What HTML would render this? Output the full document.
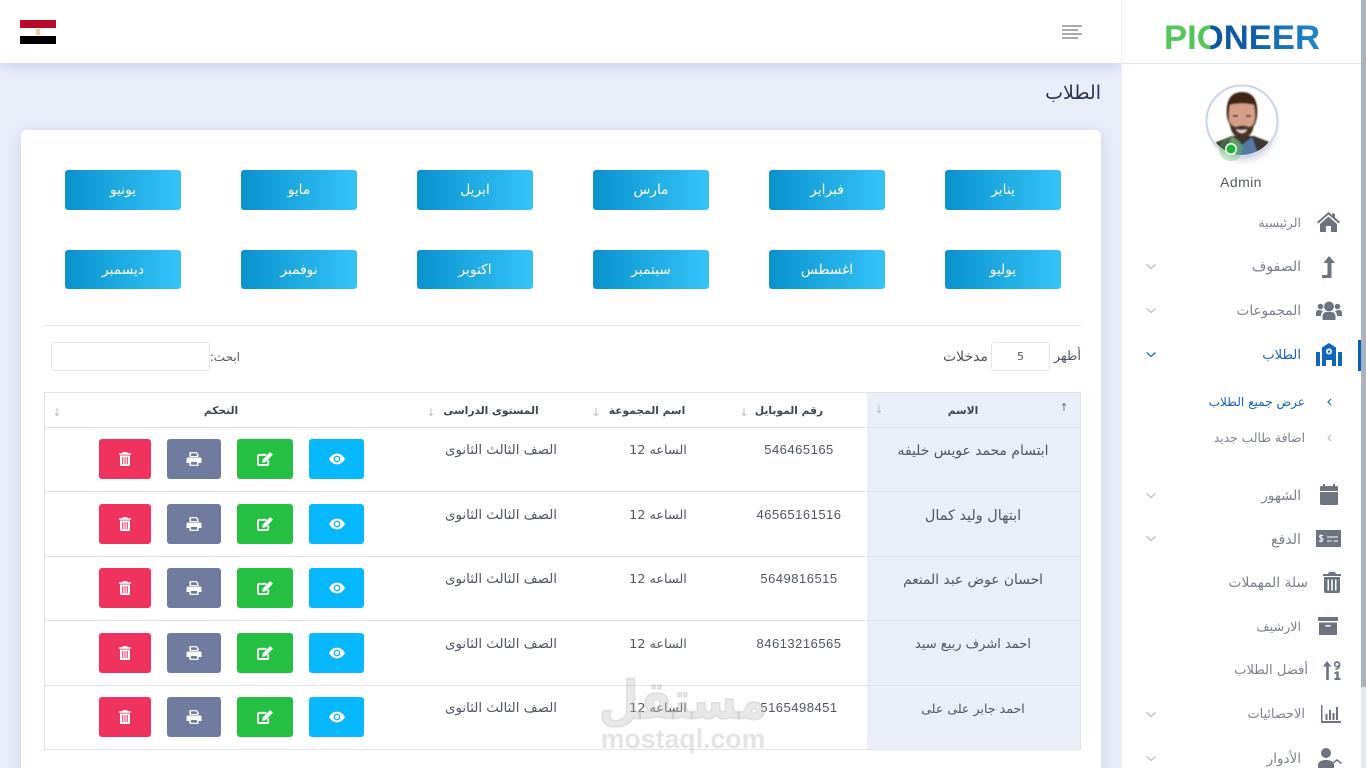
<!DOCTYPE html>
<html lang="ar">
<head>
<meta charset="utf-8">
<title>الطلاب</title>
<style>
*{box-sizing:border-box}
html,body{margin:0;padding:0;width:1366px;height:768px;overflow:hidden;background:#e9eef9;font-family:"Liberation Sans","DejaVu Sans",sans-serif}
#w{position:relative;width:1366px;height:768px;overflow:hidden}
.a{position:absolute}
.t{position:absolute;white-space:nowrap;line-height:20px;height:20px;font-family:"DejaVu Sans",sans-serif}
.c{transform:translateX(-50%);text-align:center}
.r{direction:rtl;text-align:right}
.m{position:absolute;width:116px;height:40px;border-radius:3px;background:linear-gradient(90deg,#0a92ce,#36c4f8);color:#fff;font:13.8px/41px "DejaVu Sans",sans-serif;text-align:center}
.s{font-size:13.5px;color:#7b808a;margin-top:1px}
.d{font-size:13.4px;color:#50565f;margin-top:2px}
.d.n{font-family:"Liberation Sans",sans-serif;font-size:13px;letter-spacing:.5px;margin-top:1px}
.h{font-size:10.7px;font-weight:bold;color:#3f4650;margin-top:1px}
.ar{font-size:11px;color:#b6bcc6;font-family:"DejaVu Sans",sans-serif}
.b{position:absolute;height:40px;border-radius:3px}
.b svg{position:absolute;left:50%;top:50%;transform:translate(-50%,-50%)}
.l{position:absolute;left:44px;width:1037px;height:1px;background:#dfe3ea}
.i{position:absolute;fill:#6d7480}
.ch{position:absolute;fill:none;stroke:#b7bcc5;stroke-width:1.2}
</style>
</head>
<body>
<div id="w">
<svg width="0" height="0" style="position:absolute">
<defs>
<symbol id="eye" viewBox="0 0 18 12"><path fill="#fff" d="M9 0C5 0 2 2.500 0 6c2 3.500 5 6 9 6s7-2.500 9-6c-2-3.500-5-6-9-6z"/><circle cx="9" cy="6" r="3.800" fill="#08b8fd"/><circle cx="9" cy="6" r="2.300" fill="#fff"/></symbol>
<symbol id="edit" viewBox="0 0 17 15"><path fill="none" stroke="#fff" stroke-width="2" d="M10 3H2.500A1.500 1.500 0 0 0 1 4.500v8.500A1 1 0 0 0 2 14h9a1 1 0 0 0 1-1V9"/><path fill="#fff" d="M14 0l3 3-8 8-3.500.500L6 8z"/></symbol>
<symbol id="print" viewBox="0 0 15 14"><path fill="#fff" fill-rule="evenodd" d="M3 0h7l2 2v3H3zM4.500 1.300v2.700h6V2.500l-1-1.200zM1.500 5.500h12A1.500 1.500 0 0 1 15 7v4h-3v3H3v-3H0V7a1.500 1.500 0 0 1 1.500-1.500zM4.500 10v2.700h6V10z"/></symbol>
<symbol id="trash" viewBox="0 0 12 14"><path fill="#fff" fill-rule="evenodd" d="M4 0h4l.700 1.200H12v1.500H0V1.200h3.300zM1 3.500h10V13a1 1 0 0 1-1 1H2a1 1 0 0 1-1-1zM3.200 5v7.300h1V5zM5.500 5v7.300h1V5zM7.800 5v7.300h1V5z"/></symbol>
<linearGradient id="lg" gradientUnits="userSpaceOnUse" x1="1165" y1="0" x2="1320" y2="0">
<stop offset="0" stop-color="#55c75a"/><stop offset="0.295" stop-color="#55c75a"/><stop offset="0.295" stop-color="#0d559f"/><stop offset="0.5" stop-color="#0d5aa5"/><stop offset="1" stop-color="#2089c8"/>
</linearGradient>
</defs>
</svg>

<!-- header -->
<div class="a" style="left:0;top:0;width:1122px;height:63px;background:#fff;box-shadow:0 2px 14px rgba(130,145,185,.35)"></div>
<div class="a" style="left:20px;top:20px;width:36px;height:8px;background:#bd0a2b"></div>
<div class="a" style="left:20px;top:28px;width:36px;height:8px;background:#fff"></div>
<div class="a" style="left:20px;top:36px;width:36px;height:8px;background:#000"></div>
<div class="a" style="left:36px;top:29px;width:4px;height:6px;background:#eccf9a"></div>
<div class="a" style="left:1062px;top:25px;width:20px;height:2px;background:#a9abaf"></div>
<div class="a" style="left:1062px;top:29px;width:16px;height:2px;background:#a9abaf"></div>
<div class="a" style="left:1062px;top:33px;width:20px;height:2px;background:#a9abaf"></div>
<div class="a" style="left:1062px;top:37px;width:16px;height:2px;background:#a9abaf"></div>

<div class="t r" style="right:265px;top:83px;font-size:19px;color:#2b3352">الطلاب</div>

<!-- card -->
<div class="a" style="left:21px;top:130px;width:1080px;height:660px;background:#fff;border-radius:6px;box-shadow:0 4px 18px rgba(130,145,185,.3)"></div>

<div class="m" style="left:945px;top:170px">يناير</div>
<div class="m" style="left:769px;top:170px">فبراير</div>
<div class="m" style="left:593px;top:170px">مارس</div>
<div class="m" style="left:417px;top:170px">ابريل</div>
<div class="m" style="left:241px;top:170px">مايو</div>
<div class="m" style="left:65px;top:170px">يونيو</div>
<div class="m" style="left:945px;top:250px;height:39px">يوليو</div>
<div class="m" style="left:769px;top:250px;height:39px">اغسطس</div>
<div class="m" style="left:593px;top:250px;height:39px">سبتمبر</div>
<div class="m" style="left:417px;top:250px;height:39px">اكتوبر</div>
<div class="m" style="left:241px;top:250px;height:39px">نوفمبر</div>
<div class="m" style="left:65px;top:250px;height:39px">ديسمبر</div>

<div class="l" style="top:325px;background:#e6e8ee"></div>

<div class="t r d" style="right:285px;top:345px;font-size:13px">أظهر</div>
<div class="a" style="left:991px;top:342px;width:59px;height:29px;border:1px solid #e2e5ec;border-radius:3px;background:#fff;font:11px/27px 'DejaVu Sans',sans-serif;color:#555;text-align:center">5</div>
<div class="t r d" style="right:378px;top:345px;font-size:14px">مدخلات</div>
<div class="t r d" style="right:1126px;top:345px;font-size:12px">ابحث:</div>
<div class="a" style="left:51px;top:342px;width:159px;height:29px;border:1px solid #e2e5ec;border-radius:3px;background:#fff"></div>

<!-- table -->
<div class="a" style="left:867px;top:393px;width:214px;height:357px;background:#e9eef9"></div>
<div class="l" style="top:392px"></div>
<div class="l" style="top:427px"></div>
<div class="l" style="top:491px"></div>
<div class="l" style="top:556px"></div>
<div class="l" style="top:620px"></div>
<div class="l" style="top:685px"></div>
<div class="l" style="top:749px"></div>
<div class="a" style="left:44px;top:392px;width:1px;height:358px;background:#dfe3ea"></div>
<div class="a" style="left:1080px;top:392px;width:1px;height:358px;background:#dfe3ea"></div>

<div class="t c h" style="left:963px;top:400px">الاسم</div>
<div class="t c h" style="left:789px;top:400px">رقم الموبايل</div>
<div class="t c h" style="left:647px;top:400px">اسم المجموعة</div>
<div class="t c h" style="left:491px;top:400px">المستوى الدراسى</div>
<div class="t c h" style="left:221px;top:400px">التحكم</div>
<div class="t c ar" style="left:1064px;top:398px;color:#6f7680">↑</div>
<div class="t c ar" style="left:879px;top:400px">↓</div>
<div class="t c ar" style="left:744px;top:403px">↓</div>
<div class="t c ar" style="left:596px;top:403px">↓</div>
<div class="t c ar" style="left:431px;top:403px">↓</div>
<div class="t c ar" style="left:57px;top:403px">↓</div>

<!-- row 1 -->
<div class="t c d" style="left:973px;top:439px;font-size:13.9px">ابتسام محمد عويس خليفه</div>
<div class="t c d n" style="left:799px;top:439px">546465165</div>
<div class="t c d" style="left:658px;top:439px;font-size:12.8px">الساعه 12</div>
<div class="t c d" style="left:501px;top:439px">الصف الثالث الثانوى</div>
<div class="b" style="left:309px;top:439px;width:55px;background:#08b8fd"><svg width="16" height="11"><use href="#eye"/></svg></div>
<div class="b" style="left:237px;top:439px;width:56px;background:#25bf43"><svg width="16" height="14"><use href="#edit"/></svg></div>
<div class="b" style="left:167px;top:439px;width:54px;background:#707b9f"><svg width="15" height="14"><use href="#print"/></svg></div>
<div class="b" style="left:99px;top:439px;width:52px;background:#f0325f"><svg width="12" height="14"><use href="#trash"/></svg></div>

<!-- row 2 -->
<div class="t c d" style="left:973px;top:504px;font-size:14.4px">ابتهال وليد كمال</div>
<div class="t c d n" style="left:799px;top:504px">46565161516</div>
<div class="t c d" style="left:658px;top:504px;font-size:12.8px">الساعه 12</div>
<div class="t c d" style="left:501px;top:504px">الصف الثالث الثانوى</div>
<div class="b" style="left:309px;top:504px;width:55px;background:#08b8fd"><svg width="16" height="11"><use href="#eye"/></svg></div>
<div class="b" style="left:237px;top:504px;width:56px;background:#25bf43"><svg width="16" height="14"><use href="#edit"/></svg></div>
<div class="b" style="left:167px;top:504px;width:54px;background:#707b9f"><svg width="15" height="14"><use href="#print"/></svg></div>
<div class="b" style="left:99px;top:504px;width:52px;background:#f0325f"><svg width="12" height="14"><use href="#trash"/></svg></div>

<!-- row 3 -->
<div class="t c d" style="left:973px;top:568px;font-size:13.8px">احسان عوض عبد المنعم</div>
<div class="t c d n" style="left:799px;top:568px">5649816515</div>
<div class="t c d" style="left:658px;top:568px;font-size:12.8px">الساعه 12</div>
<div class="t c d" style="left:501px;top:568px">الصف الثالث الثانوى</div>
<div class="b" style="left:309px;top:568px;width:55px;background:#08b8fd"><svg width="16" height="11"><use href="#eye"/></svg></div>
<div class="b" style="left:237px;top:568px;width:56px;background:#25bf43"><svg width="16" height="14"><use href="#edit"/></svg></div>
<div class="b" style="left:167px;top:568px;width:54px;background:#707b9f"><svg width="15" height="14"><use href="#print"/></svg></div>
<div class="b" style="left:99px;top:568px;width:52px;background:#f0325f"><svg width="12" height="14"><use href="#trash"/></svg></div>

<!-- row 4 -->
<div class="t c d" style="left:973px;top:633px;font-size:13px">احمد اشرف ربيع سيد</div>
<div class="t c d n" style="left:799px;top:633px">84613216565</div>
<div class="t c d" style="left:658px;top:633px;font-size:12.8px">الساعه 12</div>
<div class="t c d" style="left:501px;top:633px">الصف الثالث الثانوى</div>
<div class="b" style="left:309px;top:633px;width:55px;background:#08b8fd"><svg width="16" height="11"><use href="#eye"/></svg></div>
<div class="b" style="left:237px;top:633px;width:56px;background:#25bf43"><svg width="16" height="14"><use href="#edit"/></svg></div>
<div class="b" style="left:167px;top:633px;width:54px;background:#707b9f"><svg width="15" height="14"><use href="#print"/></svg></div>
<div class="b" style="left:99px;top:633px;width:52px;background:#f0325f"><svg width="12" height="14"><use href="#trash"/></svg></div>

<!-- row 5 -->
<div class="t c d" style="left:973px;top:697px;font-size:12.6px">احمد جابر على على</div>
<div class="t c d n" style="left:799px;top:697px">5165498451</div>
<div class="t c d" style="left:658px;top:697px;font-size:12.8px">الساعه 12</div>
<div class="t c d" style="left:501px;top:697px">الصف الثالث الثانوى</div>
<div class="b" style="left:309px;top:697px;width:55px;background:#08b8fd"><svg width="16" height="11"><use href="#eye"/></svg></div>
<div class="b" style="left:237px;top:697px;width:56px;background:#25bf43"><svg width="16" height="14"><use href="#edit"/></svg></div>
<div class="b" style="left:167px;top:697px;width:54px;background:#707b9f"><svg width="15" height="14"><use href="#print"/></svg></div>
<div class="b" style="left:99px;top:697px;width:52px;background:#f0325f"><svg width="12" height="14"><use href="#trash"/></svg></div>

<!-- watermark -->
<div class="a" style="left:683px;top:672px;transform:translateX(-50%) scaleY(1.15);font:bold 46px/56px 'DejaVu Sans',sans-serif;color:rgba(190,190,190,.36);-webkit-text-stroke:1.5px rgba(190,190,190,.36);white-space:nowrap;direction:rtl">مستقل</div>
<div class="a" style="left:683px;top:722px;transform:translateX(-50%);font:bold 26.7px/34px 'Liberation Sans',sans-serif;color:rgba(190,190,190,.42);white-space:nowrap">mostaql.com</div>

<!-- sidebar -->
<div class="a" style="left:1122px;top:0;width:239px;height:768px;background:#fff"></div>
<div class="a" style="left:1121px;top:0;width:1px;height:768px;background:#eef0f5"></div>
<div class="a" style="left:1122px;top:63px;width:239px;height:1px;background:#e4e6ec"></div>
<div class="a" style="left:1361px;top:0;width:5px;height:687px;background:#abb3bb"></div>
<div class="a" style="left:1361px;top:687px;width:5px;height:81px;background:#e4e7ec"></div>

<svg class="a" style="left:0;top:0" width="1366" height="64"><text x="1164" y="49" font-family="Liberation Sans" font-weight="bold" font-size="34.500" textLength="156" lengthAdjust="spacingAndGlyphs" fill="url(#lg)">PIONEER</text></svg>

<!-- avatar -->
<svg class="a" style="left:1190px;top:75px" width="105" height="100" viewBox="0 0 105 100">
<defs><clipPath id="av"><circle cx="52" cy="46" r="34"/></clipPath><filter id="sh" x="-30%" y="-30%" width="160%" height="160%"><feGaussianBlur stdDeviation="3"/></filter><filter id="bl" x="-5%" y="-5%" width="110%" height="110%"><feGaussianBlur stdDeviation="0.700"/></filter></defs>
<ellipse cx="54" cy="54" rx="32" ry="32" fill="#aab2c8" opacity=".45" filter="url(#sh)"/>
<circle cx="52" cy="46" r="35.500" fill="#fff" stroke="#ccd4e8" stroke-width="2"/>
<g clip-path="url(#av)">
<rect x="15" y="10" width="75" height="75" fill="#fff"/>
<g filter="url(#bl)">
<path d="M24 68l18-7h22l18 7v16H24z" fill="#3e3532"/>
<path d="M43 62l9 8 10-8 8 22H38z" fill="#567aa5"/>
<path d="M36 76l6-15 9 9-5 14z" fill="#6f8a5e"/>
<path d="M37 42C35 24 42 17 52 17s17 7 15 25c-1 5-2 8-3 9l-2-20-21 0-1 20c-1-2-2-5-3-9z" fill="#3c2519"/>
<path d="M40 30c5-2 19-2 24 0 2 9 1 21-3 26-3 4-6 6-9 6s-7-2-10-6c-3-5-4-17-2-26z" fill="#d6a088"/>
<path d="M40 47c2 4 4 4 6 5 4-2 9-2 13 0 2-1 4-1 5-5 0 8-3 16-12 16s-12-8-12-16z" fill="#4a3226"/>
<path d="M46 54c3 1.500 8 1.500 11 0-1 3-3 4-5 4s-5-1-6-4z" fill="#eadcd2"/>
<rect x="43" y="40" width="5" height="1.800" fill="#4a3124"/><rect x="56" y="40" width="5" height="1.800" fill="#4a3124"/>
</g>
</g>
<circle cx="41" cy="74" r="12" fill="#52c26b" opacity=".35"/>
<circle cx="41" cy="74" r="6" fill="#fff"/>
<circle cx="41" cy="74" r="4.500" fill="#1cb53a"/>
</svg>
<div class="t c" style="left:1241px;top:172px;font-family:'Liberation Sans';font-size:14px;letter-spacing:.4px;color:#555b63">Admin</div>

<!-- sidebar items -->
<div class="t r s" style="right:65px;top:212px;font-size:12.4px">الرئيسية</div>
<svg class="i" style="left:1317px;top:212px" width="23" height="20" viewBox="0 0 23 20"><path d="M11.500 0L15 3V1.500h3V5.500L23 10l-1.300 1.500-10.200-9-10.200 9L0 10z"/><path d="M11.500 4.500L20 12v8h-6v-6H9v6H3v-8z"/></svg>

<div class="t r s" style="right:65px;top:256px;font-size:14px">الصفوف</div>
<svg class="i" style="left:1322px;top:256px" width="13" height="22" viewBox="0 0 13 22"><path d="M7 0l6 7H9.500v15H0v-3h4.500l1-1V7H1.500z"/></svg>
<svg class="ch" style="left:1145px;top:263px" width="12" height="8"><path d="M1.500 1.500L6 5.500l4.500-4"/></svg>

<div class="t r s" style="right:65px;top:300px;font-size:13.6px">المجموعات</div>
<svg class="i" style="left:1316px;top:301px" width="26" height="19" viewBox="0 0 26 19"><circle cx="13" cy="5.500" r="5"/><circle cx="4.500" cy="5.500" r="2.800"/><circle cx="21.500" cy="5.500" r="2.800"/><path d="M6.500 18.500v-3c0-3 2-4.500 4-4.500h5c2 0 4 1.500 4 4.500v3a1 1 0 0 1-1 .500h-11a1 1 0 0 1-1-.500z"/><path d="M5.500 9.500C6 10 6.500 10 7 10.500 5.500 11.500 5 13 5 15H0v-3c0-2 1.500-3 3-3z"/><path d="M20.500 9.500C20 10 19.500 10 19 10.500c1.500 1 2 2.500 2 4.500h5v-3c0-2-1.500-3-3-3z"/></svg>
<svg class="ch" style="left:1145px;top:307px" width="12" height="8"><path d="M1.500 1.500L6 5.500l4.500-4"/></svg>

<div class="t r" style="right:65px;top:346px;font-size:13.2px;color:#1763b8">الطلاب</div>
<svg class="i" style="left:1316px;top:343px;fill:#0f66bd" width="26" height="23" viewBox="0 0 26 23"><path d="M13 0l7 4.500V23h-4v-6h-6v6H6V4.500z"/><circle cx="13" cy="8.500" r="3" fill="#fff"/><circle cx="13" cy="8.500" r="1.300" fill="#0f66bd"/><path d="M0 9h4v14H0zM22 9h4v14h-4z"/></svg>
<svg class="ch" style="left:1145px;top:351px;stroke:#1763b8" width="12" height="8"><path d="M1.500 1.500L6 5.500l4.500-4"/></svg>
<div class="a" style="left:1358px;top:340px;width:3px;height:31px;background:#0a5cc0"></div>

<svg class="ch" style="left:1327px;top:398px;stroke:#1763b8" width="5" height="8"><path d="M4 1L1 4l3 3"/></svg>
<div class="t r" style="right:61px;top:392px;font-size:12.1px;color:#1763b8">عرض جميع الطلاب</div>
<svg class="ch" style="left:1327px;top:434px" width="5" height="8"><path d="M4 1L1 4l3 3"/></svg>
<div class="t r s" style="right:61px;top:428px;font-size:12.3px;margin-top:0">اضافة طالب جديد</div>

<div class="t r s" style="right:65px;top:485px">الشهور</div>
<svg class="i" style="left:1320px;top:484px" width="18" height="21" viewBox="0 0 18 21"><path d="M3 0h2v2h8V0h2v2h1.500A1.500 1.500 0 0 1 18 3.500V7H0V3.500A1.500 1.500 0 0 1 1.500 2H3zM0 8h18v11.500a1.500 1.500 0 0 1-1.500 1.500h-15A1.500 1.500 0 0 1 0 19.500z"/></svg>
<svg class="ch" style="left:1145px;top:492px" width="12" height="8"><path d="M1.500 1.500L6 5.500l4.500-4"/></svg>

<div class="t r s" style="right:65px;top:529px;font-size:14.2px">الدفع</div>
<svg class="a" style="left:1316px;top:530px" width="25" height="17" viewBox="0 0 25 17"><rect width="25" height="17" fill="#6d7480"/><path d="M5 4.500v8M7 6C6 5 3.500 5 3.500 6.500S7 7.500 7 9.500 4 12 3 10.500" fill="none" stroke="#fff" stroke-width="1"/><path d="M11 7h11M11 11h4.500M17.500 11h4.500" stroke="#fff" stroke-width="1.100"/></svg>
<svg class="ch" style="left:1145px;top:535px" width="12" height="8"><path d="M1.500 1.500L6 5.500l4.500-4"/></svg>

<div class="t r s" style="right:58px;top:572px;font-size:13.8px">سلة المهملات</div>
<svg class="i" style="left:1323px;top:572px" width="18" height="21" viewBox="0 0 18 21"><path d="M6 0h6l1 2h5v2H0V2h5z"/><path fill-rule="evenodd" d="M1 5h16v14.500a1.500 1.500 0 0 1-1.500 1.500h-13A1.500 1.500 0 0 1 1 19.500zM4.500 7.500V18.500H6V7.500zM8.200 7.500V18.500H9.800V7.500zM12 7.500V18.500h1.500V7.500z"/></svg>

<div class="t r s" style="right:65px;top:616px;font-size:12.7px">الارشيف</div>
<svg class="i" style="left:1318px;top:617px" width="20" height="18" viewBox="0 0 20 18"><path d="M0 0h20v4H0z"/><path fill-rule="evenodd" d="M1 5.500h18V18H1zM7.500 8v1.500h5V8z"/></svg>

<div class="t r s" style="right:58px;top:660px;font-size:13.1px">أفضل الطلاب</div>
<svg class="i" style="left:1323px;top:661px" width="18" height="19" viewBox="0 0 18 19"><path d="M4 0l4.500 5.500H5.800V19H3.200V5.500H0z"/><path fill-rule="evenodd" d="M14 0a3.300 3.300 0 0 1 3.300 3.500c0 3-1.800 5.500-5 5.500V7.500c1 0 1.800-.4 2.300-1.200A3.200 3.200 0 0 1 10.800 3.300 3.300 3.300 0 0 1 14 0zM14 1.700a1.600 1.600 0 1 0 .01 0z"/><path d="M13.500 10.500h2.200v6.500H17.500v2h-6v-2h1.800v-4.300l-1.800.3v-1.800z"/></svg>

<div class="t r s" style="right:61px;top:704px;font-size:12.9px">الاحصائيات</div>
<svg class="i" style="left:1321px;top:705px" width="20" height="18" viewBox="0 0 20 18"><path d="M0 0h1.500v16H20v2H0z"/><path d="M4.500 9h2v6h-2zM8 5h2v10H8zM11.500 8h2v7h-2zM15 2h2v13h-2z"/></svg>
<svg class="ch" style="left:1145px;top:711px" width="12" height="8"><path d="M1.500 1.500L6 5.500l4.500-4"/></svg>

<div class="t r s" style="right:65px;top:748px">الأدوار</div>
<svg class="i" style="left:1318px;top:748px" width="24" height="20" viewBox="0 0 24 20"><circle cx="8" cy="5" r="5"/><path d="M0 17c0-3 3-5 8-5s8 2 8 5v3H0z"/><path d="M14 15l5-4 5 4-1 1-4-3-4 3z"/></svg>
<svg class="ch" style="left:1145px;top:755px" width="12" height="8"><path d="M1.500 1.500L6 5.500l4.500-4"/></svg>
</div>
</body>
</html>
